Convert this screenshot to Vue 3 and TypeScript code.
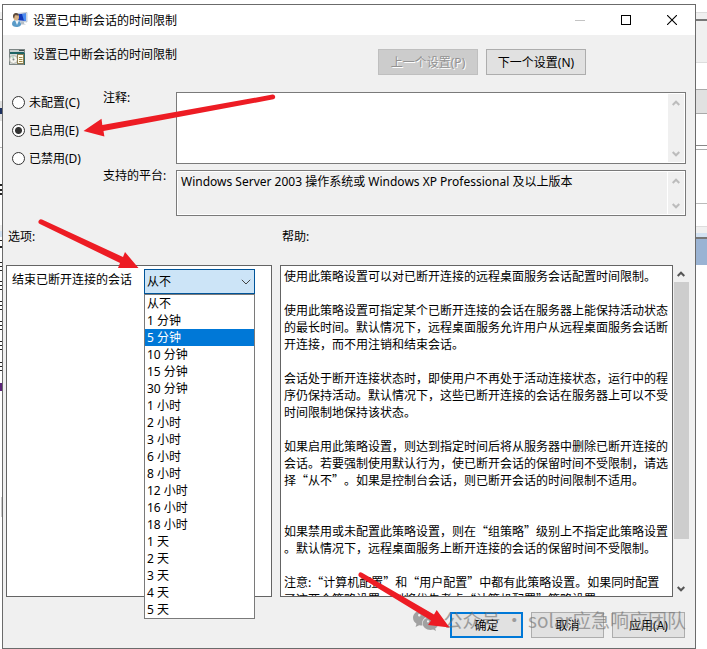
<script setup lang="ts">
import { ref } from 'vue'

type PolicyState = 'unset' | 'enabled' | 'disabled'

const states: { value: PolicyState; label: string }[] = [
  { value: 'unset', label: '未配置(C)' },
  { value: 'enabled', label: '已启用(E)' },
  { value: 'disabled', label: '已禁用(D)' },
]

const limits: string[] = [
  '从不', '1 分钟', '5 分钟', '10 分钟', '15 分钟', '30 分钟',
  '1 小时', '2 小时', '3 小时', '6 小时', '8 小时', '12 小时', '16 小时', '18 小时',
  '1 天', '2 天', '3 天', '4 天', '5 天',
]

const state = ref<PolicyState>('enabled')
const comment = ref('')
const limit = ref('从不')
const hovered = ref('5 分钟')

const platform = 'Windows Server 2003 操作系统或 Windows XP Professional 及以上版本'

const helpText = [
  '使用此策略设置可以对已断开连接的远程桌面服务会话配置时间限制。',
  '',
  '使用此策略设置可指定某个已断开连接的会话在服务器上能保持活动状态',
  '的最长时间。默认情况下，远程桌面服务允许用户从远程桌面服务会话断',
  '开连接，而不用注销和结束会话。',
  '',
  '会话处于断开连接状态时，即使用户不再处于活动连接状态，运行中的程',
  '序仍保持活动。默认情况下，这些已断开连接的会话在服务器上可以不受',
  '时间限制地保持该状态。',
  '',
  '如果启用此策略设置，则达到指定时间后将从服务器中删除已断开连接的',
  '会话。若要强制使用默认行为，使已断开会话的保留时间不受限制，请选',
  '择“从不”。如果是控制台会话，则已断开会话的时间限制不适用。',
  '',
  '',
  '如果禁用或未配置此策略设置，则在“组策略”级别上不指定此策略设置',
  '。默认情况下，远程桌面服务上断开连接的会话的保留时间不受限制。',
  '',
  '注意:“计算机配置”和“用户配置”中都有此策略设置。如果同时配置',
  '了这两个策略设置，则将优先考虑“计算机配置”策略设置。',
].join('\n')
</script>

<template>
  <div class="desktop">
    <svg class="sliver-left" width="2" height="649" aria-hidden="true">
      <rect y="12" width="2" height="7" fill="#f0f0f0" />
      <rect y="19" width="2" height="1" fill="#777" />
      <rect y="101" width="2" height="20" fill="#e1e1e1" />
      <rect y="108" width="2" height="6" fill="#1c2f5e" />
      <rect y="147" width="2" height="1" fill="#bbb" />
      <rect y="184" width="2" height="2" fill="#222" />
      <rect y="189" width="2" height="2" fill="#222" />
      <rect y="193" width="2" height="2" fill="#222" />
      <rect y="225" width="2" height="8" fill="#f0f0f0" />
      <rect y="231" width="2" height="6" fill="#d3e2f2" />
      <rect y="240" width="2" height="1" fill="#222" />
      <rect y="246" width="2" height="2" fill="#222" />
      <g fill="#222">
        <path d="M0 262h2v1H0zM0 266h2v1H0zM0 270h2v1H0zM0 281h2v1H0zM0 285h2v1H0zM0 289h2v1H0z" />
        <path d="M0 301h2v1H0zM0 305h2v1H0zM0 309h2v1H0zM0 321h2v1H0zM0 325h2v1H0zM0 329h2v1H0z" />
        <path d="M0 341h2v1H0zM0 345h2v1H0zM0 349h2v1H0zM0 362h2v1H0zM0 366h2v1H0zM0 370h2v1H0z" />
      </g>
      <rect y="383" width="2" height="8" fill="#5a2378" />
      <rect x="1" y="497" width="1" height="20" fill="#ccc" />
    </svg>

    <main class="window">
      <header class="titlebar">
        <svg class="app-icon" width="17" height="16" viewBox="0 0 17 16" aria-hidden="true">
          <path d="M6 1.500l10-1v9.500l-10-1z" fill="#dfe7f0" stroke="#9aa9ba" stroke-width=".6" />
          <path d="M7 2.300l8-.8v7.500l-8-.8z" fill="#1238b8" />
          <path d="M11 2l4-.5v7.500l-2-.2z" fill="#4c8df0" />
          <path d="M10 10h3v1.500l2 1H9z" fill="#b5bec8" />
          <path d="M1 12c0-3 2-4 4-4s4.500 1 5 4c.3 2-2 3-4.500 3S1 14 1 12z" fill="#5a9bc8" />
          <path d="M4 8l2 5 2-4.500z" fill="#eef6fb" />
          <ellipse cx="5.200" cy="5" rx="2.800" ry="3.500" fill="#d8b184" />
          <path d="M2 5C1.700 1.500 4 .7 6 1.200c1 .3 1.600.8 1.800 2C6 4 5 3 4 3.500 3.500 4 3.500 5.500 3 6.500z" fill="#5d4b3c" />
        </svg>
        <h1 class="title">设置已中断会话的时间限制</h1>
        <div class="caption-buttons">
          <button type="button" class="caption" aria-label="最小化" disabled>
            <svg width="10" height="10" viewBox="0 0 10 10"><path d="M0 5.500h10" stroke="#c4c4c4" /></svg>
          </button>
          <button type="button" class="caption" aria-label="最大化">
            <svg width="10" height="10" viewBox="0 0 10 10"><rect x=".5" y=".5" width="9" height="9" fill="none" stroke="#000" /></svg>
          </button>
          <button type="button" class="caption" aria-label="关闭">
            <svg width="10" height="10" viewBox="0 0 10 10"><path d="M0 0l10 10M10 0L0 10" stroke="#000" stroke-width="1.100" /></svg>
          </button>
        </div>
      </header>

      <section class="policy-head">
        <svg class="policy-icon" width="16" height="16" viewBox="0 0 16 16" aria-hidden="true">
          <rect width="16" height="16" fill="#7c8584" />
          <rect x="1" y="1" width="14" height="2" fill="#c9cfce" />
          <rect x="10" y="1" width="5" height="1" fill="#3c4a49" />
          <rect x="1" y="3" width="14" height="2" fill="#1f6464" />
          <rect x="1" y="5" width="14" height="10" fill="#d5dbd9" />
          <rect x="15" y="4" width="1" height="12" fill="#356b6a" />
          <circle cx="4.500" cy="10.500" r="4" fill="#f5f5f0" stroke="#9c9c94" stroke-width=".7" />
          <path d="M4.500 10.500L2 7.500l3-.8z" fill="#b9d8c5" />
          <circle cx="4.500" cy="10.500" r="1" fill="#7b8583" />
          <rect x="8.500" y="5.500" width="6" height="9" fill="#fffbe8" stroke="#8a7c50" />
          <path d="M10 8.500h3.500M10 10.500h3.500M10 12.500h3.500" stroke="#a38a45" />
        </svg>
        <h2 class="policy-name">设置已中断会话的时间限制</h2>
        <nav class="policy-nav">
          <button type="button" class="button wide" disabled>上一个设置(P)</button>
          <button type="button" class="button wide">下一个设置(N)</button>
        </nav>
      </section>

      <section class="fields">
        <div class="states" role="radiogroup" aria-label="策略状态">
          <label v-for="s in states" :key="s.value" class="state">
            <input v-model="state" type="radio" name="state" :value="s.value" />
            <span>{{ s.label }}</span>
          </label>
        </div>
        <label class="field-label" for="comment">注释:</label>
        <div class="field comment-field">
          <textarea id="comment" v-model="comment" class="field-text"></textarea>
          <div class="field-scroll" aria-hidden="true">
            <svg width="8" height="6" viewBox="0 0 8 6"><path d="M.7 5L4 1.700 7.300 5" /></svg>
            <svg width="8" height="6" viewBox="0 0 8 6"><path d="M.7 1L4 4.300 7.300 1" /></svg>
          </div>
        </div>
        <label class="field-label" for="platform">支持的平台:</label>
        <div class="field platform-field">
          <textarea id="platform" class="field-text" readonly :value="platform"></textarea>
          <div class="field-scroll" aria-hidden="true">
            <svg width="8" height="6" viewBox="0 0 8 6"><path d="M.7 5L4 1.700 7.300 5" /></svg>
            <svg width="8" height="6" viewBox="0 0 8 6"><path d="M.7 1L4 4.300 7.300 1" /></svg>
          </div>
        </div>
      </section>

      <section class="panes">
        <h3 class="pane-title">选项:</h3>
        <label class="pane-title" for="help">帮助:</label>
        <div class="options">
          <label class="option-label" for="limit">结束已断开连接的会话</label>
          <div class="combo">
            <select id="limit" v-model="limit">
              <option v-for="l in limits" :key="l" :value="l">{{ l }}</option>
            </select>
            <svg class="combo-arrow" width="10" height="6" viewBox="0 0 10 6" aria-hidden="true"><path d="M.8.800L5 5 9.200.800" fill="none" stroke="#444" /></svg>
            <ul class="menu">
              <li v-for="l in limits" :key="l" :class="{ active: l === hovered }" @mouseenter="hovered = l" @click="limit = l">{{ l }}</li>
            </ul>
          </div>
        </div>
        <div class="help">
          <textarea id="help" class="help-text" readonly :value="helpText"></textarea>
          <div class="help-scroll" aria-hidden="true">
            <svg width="8" height="6" viewBox="0 0 8 6"><path d="M.7 5L4 1.700 7.300 5" /></svg>
            <div class="track"><div class="thumb"></div></div>
            <svg width="8" height="6" viewBox="0 0 8 6"><path d="M.7 1L4 4.300 7.300 1" /></svg>
          </div>
        </div>
      </section>

      <footer class="actions">
        <button type="button" class="button primary">确定</button>
        <button type="button" class="button">取消</button>
        <button type="button" class="button">应用(A)</button>
        <div class="watermark">
          <svg width="26" height="22" viewBox="0 0 26 22" aria-hidden="true">
            <path fill-rule="evenodd" d="M9.500 1C4.300 1 0 4.500 0 8.800c0 2.500 1.400 4.600 3.500 6L2.600 18l3.500-1.800c1 .3 2.200.4 3.400.4C8 11 12 7 18.700 7 18 3.500 14.200 1 9.500 1zM6.300 5a1.300 1.300 0 110 2.600A1.300 1.300 0 016.300 5zm6.400 0a1.300 1.300 0 110 2.600 1.300 1.300 0 010-2.600z" />
            <path fill-rule="evenodd" d="M17.500 8C13 8 9.700 11 9.700 14.500S13 21 17.500 21c1 0 1.900-.2 2.700-.4L23 22l-.8-2.500c1.900-1.200 3.300-3 3.300-5C25.500 11 22 8 17.500 8zM15 11.300a1.100 1.100 0 110 2.200 1.100 1.100 0 010-2.200zm5.200 0a1.100 1.100 0 110 2.200 1.100 1.100 0 010-2.200z" />
          </svg>
          <span>公众号 · solar应急响应团队</span>
        </div>
      </footer>
    </main>

    <div class="sliver-right" aria-hidden="true"></div>

    <svg class="arrows" viewBox="0 0 707 649" preserveAspectRatio="none" aria-hidden="true">
      <path d="M272.500 94.600a2.400 2.400 0 01.9 4.700L103.500 131l.9 5.500L83.500 131l18-12.200.8 6.200z" />
      <path d="M42 219.600a2.400 2.400 0 00-2.100 4.500L120 263l-2 5 20.500 0L125 252l-2 5z" />
      <path d="M362 572.700a2.400 2.400 0 00-2.400 4.200L431 620.500l-3 4.500 21.500 2.500L436.700 610l-2.700 4.500z" />
    </svg>
  </div>
</template>

<style>
body {
  margin: 0;
  background: #fff;
}
</style>

<style scoped>
* {
  box-sizing: border-box;
}

.desktop {
  position: relative;
  display: grid;
  grid-template-columns: 2px minmax(0, 1fr) 11px;
  min-height: 100vh;
  overflow: hidden;
  background: #fff;
  color: #000;
  font: 12px/17px "Noto Sans", "Noto Sans CJK SC", sans-serif;
}

.sliver-right {
  background: linear-gradient(
    #fff 12px, #ddd 12px 13px, #f0f0f0 13px 19px, #777 19px 21px,
    #f0f0f0 21px 62px, #ddd 62px 63px, #fff 63px 89px, #aaa 89px 90px,
    #e1e1e1 90px 113px, #aaa 113px 114px, #fff 114px 145px, #888 145px 146px,
    #fff 146px 149px, #aaa 149px 150px, #fff 150px 203px, #bbb 203px 204px,
    #fff 204px 226px, #ddd 226px 227px, #f0f0f0 227px 233px, #d3e2f2 233px 237px,
    #777 237px 239px, #9ab3d3 239px 265px, #fff 265px
  );
}

.window {
  display: flex;
  flex-direction: column;
  margin-top: 4px;
  border: 1px solid #6b6b6b;
  background: #f0f0f0;
}

h1,
h2,
h3 {
  margin: 0;
  font: inherit;
}

button,
textarea,
select {
  margin: 0;
  font: inherit;
  color: inherit;
}

.titlebar {
  display: flex;
  align-items: center;
  height: 30px;
  padding-left: 8px;
  background: #fff;
}

.title {
  flex: 1;
  padding-left: 5px;
}

.caption-buttons {
  display: flex;
}

.caption {
  display: grid;
  place-items: center;
  width: 46px;
  height: 28px;
  padding: 0;
  border: 0;
  background: none;
}

.policy-head {
  display: flex;
  align-items: flex-start;
  height: 57px;
  padding: 14px 109px 0 6px;
}

.policy-name {
  flex: 1;
  padding-left: 8px;
  margin-top: -3px;
}

.policy-nav {
  display: flex;
  gap: 8px;
}

.button {
  width: 73px;
  height: 26px;
  padding: 0;
  border: 1px solid #adadad;
  background: #e1e1e1;
}

.wide {
  width: 100px;
}

.button:disabled {
  border-color: #bfbfbf;
  background: #ccc;
  color: #929292;
  text-shadow: 1px 1px 0 #fff;
}

.primary {
  border: 2px solid #0078d7;
}

.fields {
  display: grid;
  grid-template-columns: 91px 73px minmax(0, 1fr);
  row-gap: 6px;
  padding: 0 9px;
}

.states {
  grid-row: 1 / 3;
  display: flex;
  flex-direction: column;
  gap: 11px;
  padding-top: 2px;
}

.state {
  display: flex;
  align-items: center;
  gap: 4px;
}

.state input {
  flex: none;
  width: 13px;
  height: 13px;
  margin: 0;
  appearance: none;
  border: 1px solid #333;
  border-radius: 50%;
  background: #fff;
}

.state input:checked {
  background: radial-gradient(circle, #333 3px, #fff 4px);
}

.field-label {
  margin-top: -3px;
}

.field {
  display: flex;
  padding: 1px;
  border: 1px solid #7a7a7a;
  background: #fff;
}

.comment-field {
  height: 72px;
}

.platform-field {
  gap: 1px;
  height: 46px;
}

.field-text {
  flex: 1;
  min-width: 0;
  padding: 1px 3px;
  border: 0;
  outline: 0;
  resize: none;
  overflow: hidden;
  background: #fff;
}

.field-text:read-only {
  background: #f0f0f0;
}

.field-scroll {
  display: flex;
  flex-direction: column;
  align-items: center;
  justify-content: space-between;
  width: 16px;
  padding: 6px 0 5px;
  background: #f0f0f0;
}

.field-scroll path {
  fill: none;
  stroke: #bcbcbc;
  stroke-width: 2;
}

.panes {
  flex: 1;
  display: grid;
  grid-template-columns: minmax(0, 266px) minmax(0, 1fr);
  grid-template-rows: 49px minmax(332px, 1fr);
  column-gap: 8px;
  padding: 0 6px 0 3px;
}

.pane-title {
  padding: 12px 2px 0;
}

.options {
  display: flex;
  align-items: flex-start;
  padding: 3px 0 0 5px;
  border: 1px solid #646464;
  background: #fff;
}

.option-label {
  width: 132px;
  padding-top: 2px;
}

.combo {
  position: relative;
  width: 111px;
}

.combo select {
  display: block;
  width: 100%;
  height: 25px;
  padding: 0 2px;
  appearance: none;
  border: 1px solid #005499;
  border-radius: 0;
  background: #cce4f7;
}

.combo-arrow {
  position: absolute;
  top: 10px;
  right: 4px;
  pointer-events: none;
}

.menu {
  position: absolute;
  top: 25px;
  left: 0;
  right: 0;
  z-index: 1;
  margin: 0;
  padding: 0;
  border: 1px solid #7a7a7a;
  background: #fff;
  list-style: none;
}

.menu li {
  padding-left: 2px;
}

.menu .active {
  background: #0078d7;
  color: #fff;
}

.help {
  display: flex;
}

.help-text {
  flex: 1;
  min-width: 0;
  padding: 1px 3px;
  border: 1px solid #646464;
  outline: 0;
  resize: none;
  overflow: hidden;
  background: #fff;
  white-space: pre;
  font-family: "Noto Sans CJK SC", sans-serif;
  text-spacing-trim: space-all;
}

.help-scroll {
  display: flex;
  flex-direction: column;
  align-items: center;
  width: 16px;
  padding: 6px 0 5px;
}

.help-scroll path {
  fill: none;
  stroke: #555;
  stroke-width: 2;
}

.track {
  flex: 1;
  width: 15px;
  margin: 5px 0;
}

.thumb {
  height: 86%;
  background: #cdcdcd;
}

.actions {
  position: relative;
  display: flex;
  justify-content: flex-end;
  gap: 8px;
  padding: 15px 10px 10px;
}

.watermark {
  position: absolute;
  top: 9px;
  right: 9px;
  display: flex;
  align-items: center;
  gap: 5px;
  color: #6e6e6e;
  opacity: 0.6;
  font: 19px/28px "Noto Sans CJK SC", sans-serif;
  white-space: nowrap;
  pointer-events: none;
}

.watermark svg {
  fill: #6e6e6e;
}

.arrows {
  position: absolute;
  inset: 0;
  z-index: 2;
  width: 100%;
  height: 100%;
  fill: #ed1c24;
  pointer-events: none;
}
</style>
